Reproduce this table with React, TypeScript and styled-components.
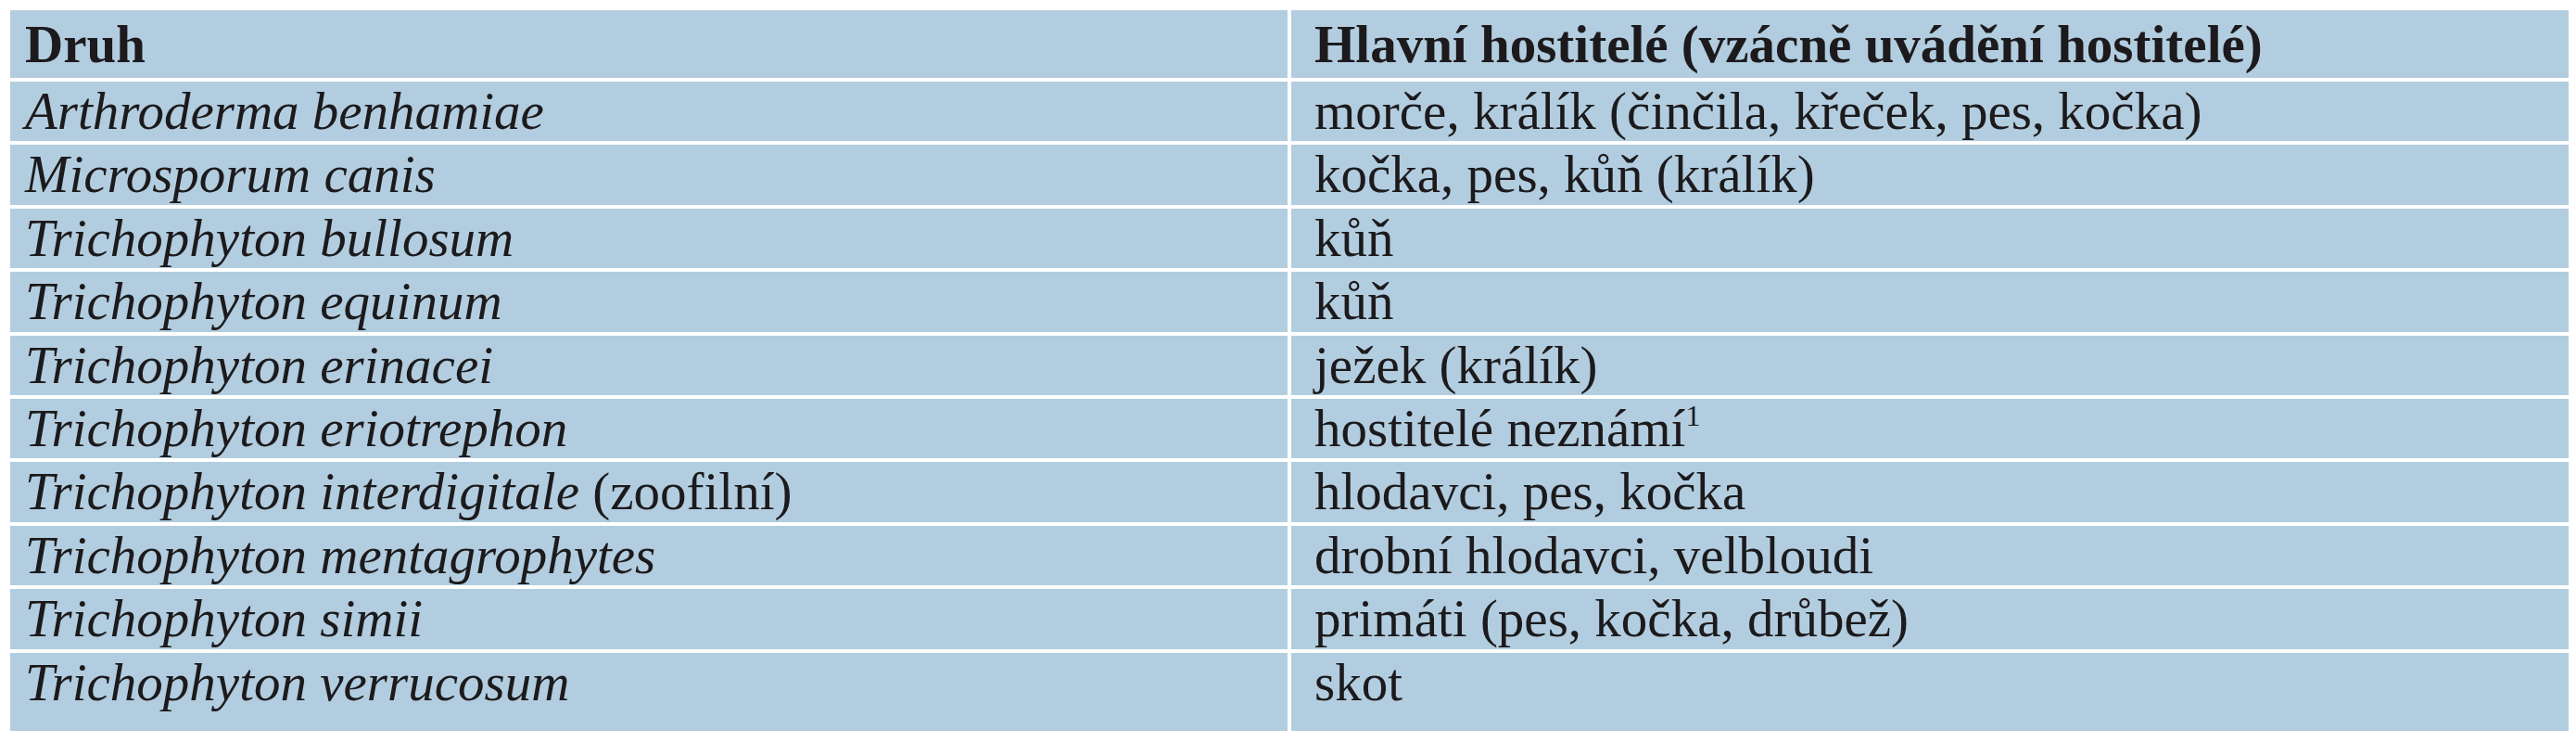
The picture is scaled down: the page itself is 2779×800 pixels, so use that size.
import styled, { createGlobalStyle } from 'styled-components';

const GlobalStyle = createGlobalStyle`
  html, body {
    margin: 0;
    padding: 0;
    background: #ffffff;
  }
`;

const cellBlue = '#b2cddf';
const inkColor = '#1c1a1c';

const Table = styled.table`
  margin: 7px 0 0 7px;
  width: 2768px;
  border-collapse: separate;
  border-spacing: 4px;
  table-layout: fixed;
  font-family: 'Liberation Serif', 'Times New Roman', serif;
  font-size: 57px;
  color: ${inkColor};
`;

const HeadCell = styled.th<{ $first?: boolean }>`
  background-color: ${cellBlue};
  text-align: left;
  font-weight: 700;
  line-height: 62px;
  height: 73px;
  box-sizing: border-box;
  padding: 6px 0 5px ${(p) => (p.$first ? '16px' : '25px')};
  vertical-align: top;
  white-space: nowrap;
`;

const Cell = styled.td<{ $first?: boolean; $last?: boolean }>`
  background-color: ${cellBlue};
  line-height: 62px;
  box-sizing: border-box;
  height: ${(p) => (p.$last ? '84px' : '64.4px')};
  padding: 1px 0 0 ${(p) => (p.$first ? '16px' : '25px')};
  vertical-align: top;
  white-space: nowrap;
`;

const Species = styled.i`
  font-style: italic;
`;

const Note = styled.sup`
  font-size: 32px;
  line-height: 0;
  vertical-align: 22px;
`;

const rows = [
  { species: 'Arthroderma benhamiae', hosts: 'morče, králík (činčila, křeček, pes, kočka)' },
  { species: 'Microsporum canis', hosts: 'kočka, pes, kůň (králík)' },
  { species: 'Trichophyton bullosum', hosts: 'kůň' },
  { species: 'Trichophyton equinum', hosts: 'kůň' },
  { species: 'Trichophyton erinacei', hosts: 'ježek (králík)' },
  { species: 'Trichophyton eriotrephon', hosts: 'hostitelé neznámí', note: '1' },
  { species: 'Trichophyton interdigitale', extra: ' (zoofilní)', hosts: 'hlodavci, pes, kočka' },
  { species: 'Trichophyton mentagrophytes', hosts: 'drobní hlodavci, velbloudi' },
  { species: 'Trichophyton simii', hosts: 'primáti (pes, kočka, drůbež)' },
  { species: 'Trichophyton verrucosum', hosts: 'skot' },
];

function App() {
  return (
    <>
      <GlobalStyle />
      <Table>
        <thead>
          <tr>
            <HeadCell $first>Druh</HeadCell>
            <HeadCell>Hlavní hostitelé (vzácně uvádění hostitelé)</HeadCell>
          </tr>
        </thead>
        <tbody>
          {rows.map((row, i) => {
            const last = i === rows.length - 1;
            return (
              <tr key={row.species}>
                <Cell $first $last={last}>
                  <Species>{row.species}</Species>
                  {row.extra}
                </Cell>
                <Cell $last={last}>
                  {row.hosts}
                  {row.note && <Note>{row.note}</Note>}
                </Cell>
              </tr>
            );
          })}
        </tbody>
      </Table>
    </>
  );
}
export default App;
